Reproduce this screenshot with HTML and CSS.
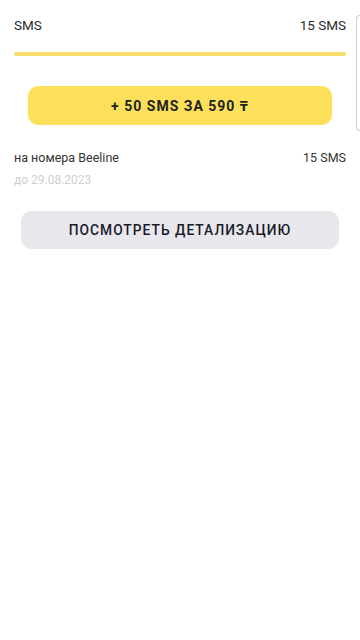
FILE: index.html
```html
<!DOCTYPE html>
<html lang="ru">
<head>
<meta name="viewport" content="width=device-width, initial-scale=1.0">
<meta charset="UTF-8">
<title>SMS</title>
<link rel="stylesheet" href="styles.css">
</head>
<body>

<div class="main">
<div class="row head">
<span>SMS</span>
<span>15 SMS</span>
</div>
<div class="bar"></div>

<div class="btn buy">+ 50 SMS ЗА 590 ₸</div>

<div class="row info">
<span>на номера Beeline</span>
<span>15 SMS</span>
</div>
<div class="date">до 29.08.2023</div>

<div class="btn details">ПОСМОТРЕТЬ ДЕТАЛИЗАЦИЮ</div>
</div>

<div class="edge"></div>

</body>
</html>
```

FILE: styles.css
```css
body{
margin:0;
background:#fff;
font-family: Roboto, "Noto Sans", sans-serif;
color:#222;
}

.main{
padding:17px 14px 0;
}

.row{
display:flex;
justify-content:space-between;
align-items:center;
}

.head{
font-size:13.5px;
line-height:16px;
color:#2a2a2a;
}

.bar{
margin-top:19px;
height:4px;
border-radius:2px;
background:#f6dc6c;
}

.btn{
display:flex;
justify-content:center;
align-items:center;
border-radius:10px;
}

.buy{
margin:30px 14px 0;
height:39px;
background:#fde05a;
font-size:14px;
font-weight:bold;
letter-spacing:1px;
color:#222;
}

.info{
margin-top:25px;
font-size:12.5px;
line-height:15px;
color:#333;
}

.date{
margin-top:8px;
font-size:12px;
line-height:15px;
color:#d0d0d4;
}

.details{
margin:23px 7px 0;
height:38px;
background:#e8e8ec;
font-size:13.8px;
font-weight:500;
letter-spacing:1px;
color:#1a1a2c;
}

.edge{
position:fixed;
top:15px; right:0;
width:3px;
height:114px;
border:1px solid #cfcfcf;
border-right:none;
border-radius:5px 0 0 5px;
}
```
